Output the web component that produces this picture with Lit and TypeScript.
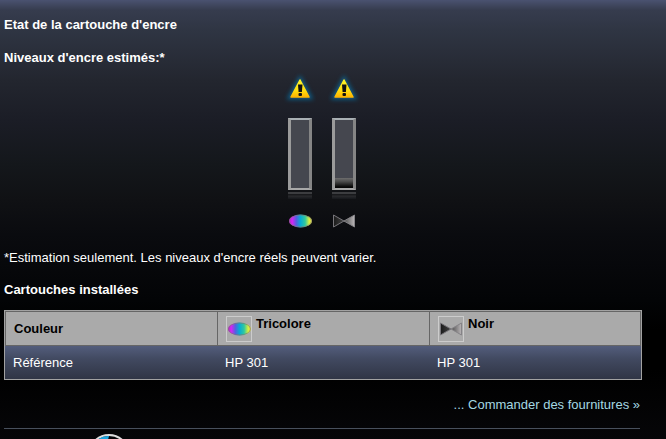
import { LitElement, html, css } from "lit";
import { customElement, property } from "lit/decorators.js";

@customElement("ink-icon")
class InkIcon extends LitElement {
  @property() kind = "color";

  static styles = css`
    :host { display: block; width: 24px; height: 14px; }
    svg { display: block; }
  `;

  render() {
    return this.kind === "color"
      ? html`<svg width="24" height="14" viewBox="0 0 24 14" role="img" aria-label="Tricolore">
          <defs>
            <linearGradient id="h">
              <stop offset="0" stop-color="#b81ad8" /><stop offset=".14" stop-color="#d426f4" />
              <stop offset=".32" stop-color="#5560e0" /><stop offset=".5" stop-color="#06acd4" />
              <stop offset=".7" stop-color="#30c8a0" /><stop offset=".88" stop-color="#d8f040" />
              <stop offset="1" stop-color="#e0dc50" />
            </linearGradient>
          </defs>
          <ellipse cx="12.500" cy="7" rx="11.500" ry="6.500" fill="url(#h)" />
          <ellipse cx="12.500" cy="7" rx="11" ry="6" fill="none" stroke="#807870" stroke-opacity=".65" />
        </svg>`
      : html`<svg width="24" height="14" viewBox="0 0 24 14" role="img" aria-label="Noir">
          <defs>
            <linearGradient id="l"><stop offset="0" stop-color="#1a1a1a" /><stop offset="1" stop-color="#444" /></linearGradient>
            <linearGradient id="r"><stop offset="0" stop-color="#4c4c4c" /><stop offset="1" stop-color="#bab6b8" /></linearGradient>
          </defs>
          <path d="M1.500 1 12 7 1.500 13z" fill="url(#l)" stroke="#77757a" />
          <path d="M22.500 1 12 7l10.500 6z" fill="url(#r)" stroke="#858387" />
        </svg>`;
  }
}

@customElement("ink-gauge")
class InkGauge extends LitElement {
  @property() kind = "color";
  @property({ type: Number }) level = 0;

  static styles = css`
    :host { display: flex; flex-direction: column; align-items: center; width: 24px; }
    .warn { display: block; width: 32px; height: 32px; }
    .tube {
      box-sizing: border-box; width: 24px; height: 72px; margin-top: 13px;
      border: 2px solid; border-width: 2px 3px; border-color: #a9b0b4 #858585 #a8a8a8 #9b9b9b;
      background: #45474f; display: flex; flex-direction: column; justify-content: flex-end;
    }
    .ink { background: linear-gradient(#6d6d6d, #4c4c4c 35%, #060606 90%); }
    .mirror {
      box-sizing: border-box; width: 24px; height: 7px; margin-top: 2px;
      border-top: 2px solid #3c3d40;
      background: linear-gradient(#18191c 1px, #2a2b2e 2px, #15171b);
    }
    ink-icon { margin-top: 15px; }
  `;

  render() {
    return html`
      <svg class="warn" viewBox="0 0 32 32" role="img" aria-label="Niveau bas">
        <defs>
          <linearGradient id="y" x2="0" y2="1"><stop offset="0" stop-color="#fff428" /><stop offset=".6" stop-color="#ffe010" /><stop offset="1" stop-color="#ffb400" /></linearGradient>
          <filter id="g" x="-50%" y="-50%" width="200%" height="200%"><feGaussianBlur stdDeviation="2" /></filter>
        </defs>
        <path d="M16 5 27 25H5z" fill="#087ab4" stroke="#087ab4" stroke-width="3" opacity=".65" filter="url(#g)" />
        <path d="M16 7 25 24H7z" fill="url(#y)" stroke="url(#y)" stroke-width="1.500" stroke-linejoin="round" />
        <path d="M14 11.500h4.500l-.6 7.500h-3.300z" fill="#111" />
        <rect x="14.500" y="20" width="3.500" height="3" rx="1" fill="#111" />
      </svg>
      <div class="tube"><div class="ink" style="height:${this.level}%"></div></div>
      <div class="mirror"></div>
      <ink-icon kind=${this.kind}></ink-icon>
    `;
  }
}

@customElement("app-root")
class AppRoot extends LitElement {
  static styles = css`
    :host {
      display: block; box-sizing: border-box; height: 100vh; overflow: hidden;
      padding: 17px 26px 0 4px; color: #fff;
      font: 13px/16px "Liberation Sans", Arial, sans-serif;
      background: #030304 linear-gradient(#4a5270, #363c4e 10px, #2f3543 30px, #23262f 80px, #1b1d26 120px, #14171b 165px, #101114 200px, #0a0b0f 234px, #030406 300px, #000 330px, #000 370px, #060608 439px);
    }
    h1, h2, p { margin: 0; font-size: 13px; line-height: 16px; }
    .sub { margin-top: 17px; }
    .gauges { display: flex; justify-content: center; gap: 20px; margin-top: 7px; }
    .note { margin-top: 22px; }
    .installed { margin-top: 16px; }
    table {
      width: calc(100% + 2px); margin-top: 12px; table-layout: fixed;
      border: 1px solid #a2a2a2; border-spacing: 0;
    }
    th, td { box-sizing: border-box; text-align: left; padding: 0 8px; }
    th { height: 35px; background: #aaa; color: #000; border: solid #666; border-width: 1px 0 1px 1px; }
    th:last-child { border-right-width: 1px; }
    td { height: 33px; }
    .row { background: linear-gradient(#535d7c, #414960 40%, #303545); }
    .head { display: flex; gap: 4px; }
    .frame { box-sizing: border-box; width: 26px; height: 26px; border: 1px solid #ccc; padding: 5px 0; }
    .order { margin-top: 17px; text-align: right; }
    a { color: #a5d8e2; text-decoration: none; }
    .foot { margin-top: 15px; border-top: 1px solid #48505c; padding: 5px 0 0 84px; }
    .logo { display: block; }
  `;

  render() {
    return html`
      <h1>Etat de la cartouche d'encre</h1>
      <h2 class="sub">Niveaux d'encre estimés:*</h2>
      <div class="gauges">
        <ink-gauge kind="color" level="0"></ink-gauge>
        <ink-gauge kind="black" level="14"></ink-gauge>
      </div>
      <p class="note">*Estimation seulement. Les niveaux d'encre réels peuvent varier.</p>
      <h2 class="installed">Cartouches installées</h2>
      <table>
        <thead>
          <tr>
            <th scope="col">Couleur</th>
            <th scope="col"><div class="head"><div class="frame"><ink-icon kind="color"></ink-icon></div><span>Tricolore</span></div></th>
            <th scope="col"><div class="head"><div class="frame"><ink-icon kind="black"></ink-icon></div><span>Noir</span></div></th>
          </tr>
        </thead>
        <tbody>
          <tr class="row"><td>Référence</td><td>HP 301</td><td>HP 301</td></tr>
        </tbody>
      </table>
      <p class="order"><a href="#">... Commander des fournitures »</a></p>
      <div class="foot">
        <svg class="logo" width="42" height="42" viewBox="0 0 42 42" role="img" aria-label="HP">
          <circle cx="21" cy="21" r="20" fill="#050507" stroke="#ddd" stroke-width="2" />
          <path d="M9 6a18 18 0 0 1 12-4l-2 8z" fill="#1aa5e0" />
        </svg>
      </div>
    `;
  }
}
